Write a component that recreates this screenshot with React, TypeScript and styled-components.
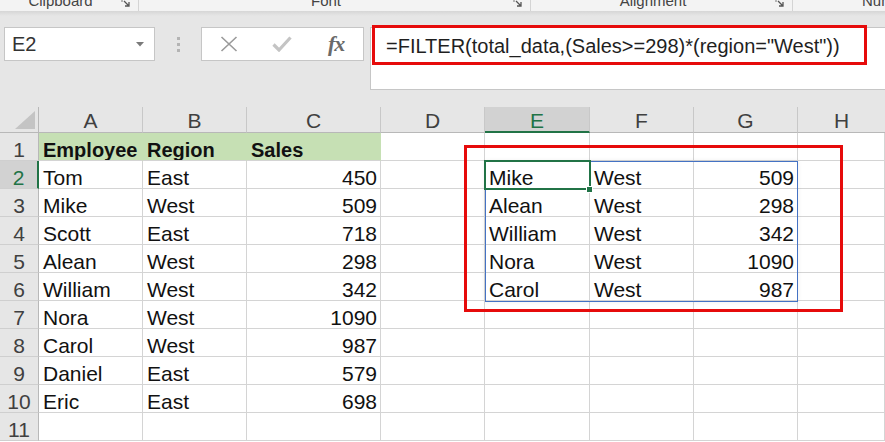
import React from 'react';
import styled, { createGlobalStyle, css } from 'styled-components';

const GlobalStyle = createGlobalStyle`
  html, body { margin: 0; padding: 0; background: #ffffff; }
  body { font-family: "Liberation Sans", Arial, sans-serif; overflow: hidden; }
`;

const GREEN = '#217346';
const GRID = '#d4d4d4';
const HEAD_BG = '#e6e6e6';

const Page = styled.div`
  width: 885px;
  height: 442px;
  overflow: hidden;
  background: #ffffff;
`;

/* ribbon group captions, cut at the top of the shot */
const Ribbon = styled.div`
  display: grid;
  grid-template-columns: 139px 392px 262px 1fr;
  height: 11px;
  overflow: hidden;
  background: #f3f3f3;
`;

const Group = styled.div<{ $last?: boolean }>`
  display: flex;
  align-items: flex-start;
  border-right: ${p => (p.$last ? 'none' : '1px solid #d4d4d4')};
`;

const GroupLabel = styled.div<{ $left?: number }>`
  flex: 1;
  margin-top: -8px;
  padding-left: ${p => (p.$left ? `${p.$left}px` : '0')};
  text-align: ${p => (p.$left ? 'left' : 'center')};
  font-size: 15px;
  line-height: 17px;
  color: #444444;
  white-space: nowrap;
`;

const Launcher = styled.svg`
  margin: -2px 6px 0 0;
  flex: none;
`;

const Toolbar = styled.div`
  display: flex;
  align-items: flex-start;
  padding: 16px 0 17px 4px;
  background: linear-gradient(#d6d6d6, ${HEAD_BG} 5px);
`;

const NameBox = styled.div`
  width: 151px;
  height: 34px;
  box-sizing: border-box;
  display: flex;
  align-items: center;
  justify-content: space-between;
  padding: 0 10px 0 7px;
  background: #ffffff;
  border: 1px solid #c6c6c6;
  font-size: 20px;
  color: #333333;
`;

const Grip = styled.div`
  width: 46px;
  height: 34px;
  display: flex;
  flex-direction: column;
  align-items: center;
  justify-content: center;
  gap: 3px;
`;

const GripDot = styled.span`
  width: 3px;
  height: 3px;
  background: #b4b4b4;
`;

const ButtonBox = styled.div`
  width: 163px;
  height: 34px;
  box-sizing: border-box;
  display: grid;
  grid-template-columns: repeat(3, 1fr);
  align-items: center;
  justify-items: center;
  background: #ffffff;
  border: 1px solid #c6c6c6;
`;

const Fx = styled.span`
  font-family: "Liberation Serif", "Times New Roman", serif;
  font-style: italic;
  font-weight: 700;
  font-size: 22px;
  color: #6a6a6a;
  letter-spacing: -1px;
`;

const FormulaBox = styled.div`
  position: relative;
  flex: 1;
  height: 63px;
  box-sizing: border-box;
  margin-left: 6px;
  padding: 2px 0 0 15px;
  background: #ffffff;
  border: 1px solid #c6c6c6;
  border-right: none;
  font-size: 20px;
  line-height: 32px;
  color: #1f1f1f;
  white-space: nowrap;
`;

const Annotation = styled.div<{ $x: number; $y: number; $w: number; $h: number }>`
  position: absolute;
  left: ${p => p.$x}px;
  top: ${p => p.$y}px;
  width: ${p => p.$w}px;
  height: ${p => p.$h}px;
  box-sizing: border-box;
  border: 3px solid #e60b0b;
  pointer-events: none;
`;

const Sheet = styled.div`
  position: relative;
`;

const Grid = styled.div`
  display: grid;
  grid-template-columns: 39px 104px 104px 134px 104px 105px 104px 104px 1fr;
  grid-template-rows: 26px;
  grid-auto-rows: 28px;
`;

const cellBase = css`
  box-sizing: border-box;
  overflow: hidden;
  white-space: nowrap;
`;

const Corner = styled.div`
  ${cellBase};
  display: flex;
  align-items: flex-end;
  justify-content: flex-end;
  padding: 0 3px 3px 0;
  background: ${HEAD_BG};
  border-right: 1px solid #b8b8b8;
  border-bottom: 1px solid #b8b8b8;
`;

const ColHead = styled.div<{ $active?: boolean; $last?: boolean }>`
  ${cellBase};
  padding-top: 2px;
  text-align: center;
  font-size: 21px;
  line-height: 24px;
  background: ${p => (p.$active ? '#d2d2d2' : HEAD_BG)};
  color: ${p => (p.$active ? GREEN : '#404040')};
  border-right: ${p => (p.$last ? 'none' : '1px solid #c8c8c8')};
  border-bottom: ${p => (p.$active ? `2px solid ${GREEN}` : '1px solid #b8b8b8')};
`;

const RowHead = styled.div<{ $active?: boolean }>`
  ${cellBase};
  padding-top: 6px;
  text-align: center;
  font-size: 21px;
  line-height: 22px;
  background: ${p => (p.$active ? '#d2d2d2' : HEAD_BG)};
  color: ${p => (p.$active ? GREEN : '#404040')};
  border-right: ${p => (p.$active ? `2px solid ${GREEN}` : '1px solid #b8b8b8')};
  border-bottom: 1px solid #cfcfcf;
`;

const Cell = styled.div<{ $num?: boolean; $head?: boolean }>`
  ${cellBase};
  padding: 6px ${p => (p.$num ? '3px' : '4px')} 0 4px;
  text-align: ${p => (p.$num ? 'right' : 'left')};
  font-size: ${p => (p.$head ? '20px' : '21px')};
  font-weight: ${p => (p.$head ? 700 : 400)};
  line-height: 22px;
  color: #111111;
  background: ${p => (p.$head ? '#c6e0b4' : '#ffffff')};
  border-right: 1px solid ${p => (p.$head ? '#c6e0b4' : GRID)};
  border-bottom: 1px solid ${GRID};
`;

const SpillFrame = styled.div`
  position: absolute;
  left: 485px;
  top: 54px;
  width: 313px;
  height: 141px;
  box-sizing: border-box;
  border: 1px solid #4472c4;
  box-shadow: 0 0 5px rgba(0, 0, 0, 0.07);
  pointer-events: none;
`;

const Selection = styled.div`
  position: absolute;
  left: 484px;
  top: 53px;
  width: 107px;
  height: 30px;
  box-sizing: border-box;
  border: 2px solid ${GREEN};
  pointer-events: none;
`;

const FillHandle = styled.div`
  position: absolute;
  left: 586px;
  top: 79px;
  width: 7px;
  height: 7px;
  box-sizing: border-box;
  background: ${GREEN};
  border: 1px solid #ffffff;
`;

type Row = [string, string, number | null];

const source: Row[] = [
  ['Tom', 'East', 450],
  ['Mike', 'West', 509],
  ['Scott', 'East', 718],
  ['Alean', 'West', 298],
  ['William', 'West', 342],
  ['Nora', 'West', 1090],
  ['Carol', 'West', 987],
  ['Daniel', 'East', 579],
  ['Eric', 'East', 698],
];

const result = source.filter(r => (r[2] ?? 0) >= 298 && r[1] === 'West');

const columns = ['A', 'B', 'C', 'D', 'E', 'F', 'G', 'H'];

const LauncherIcon = () => (
  <Launcher width="11" height="10" viewBox="0 0 11 10">
    <path d="M1 1 H4 M1 1 V4" stroke="#777" strokeWidth="1" fill="none" />
    <path d="M3 3 L8 8 M8 4 V8 H4" stroke="#555" strokeWidth="1.3" fill="none" />
  </Launcher>
);

const App: React.FC = () => {
  const bodyRows = Array.from({ length: 11 }, (_, i) => i + 1);

  const renderRow = (n: number) => {
    const cells: React.ReactNode[] = [];
    const src = n >= 2 ? source[n - 2] : undefined;
    const out = n >= 2 ? result[n - 2] : undefined;

    cells.push(
      <RowHead key={`h${n}`} $active={n === 2}>
        {n}
      </RowHead>,
    );

    if (n === 1) {
      cells.push(<Cell key="a" $head>Employee</Cell>);
      cells.push(<Cell key="b" $head>Region</Cell>);
      cells.push(<Cell key="c" $head>Sales</Cell>);
    } else {
      cells.push(<Cell key="a">{src?.[0]}</Cell>);
      cells.push(<Cell key="b">{src?.[1]}</Cell>);
      cells.push(<Cell key="c" $num>{src?.[2]}</Cell>);
    }
    cells.push(<Cell key="d" />);
    cells.push(<Cell key="e">{out?.[0]}</Cell>);
    cells.push(<Cell key="f">{out?.[1]}</Cell>);
    cells.push(<Cell key="g" $num>{out?.[2]}</Cell>);
    cells.push(<Cell key="h" />);
    return cells;
  };

  return (
    <Page>
      <GlobalStyle />
      <Ribbon>
        <Group>
          <GroupLabel>Clipboard</GroupLabel>
          <LauncherIcon />
        </Group>
        <Group>
          <GroupLabel>Font</GroupLabel>
          <LauncherIcon />
        </Group>
        <Group>
          <GroupLabel>Alignment</GroupLabel>
          <LauncherIcon />
        </Group>
        <Group $last>
          <GroupLabel $left={69}>Number</GroupLabel>
        </Group>
      </Ribbon>

      <Toolbar>
        <NameBox>
          <span>E2</span>
          <svg width="8" height="5" viewBox="0 0 8 5">
            <path d="M0 0 H8 L4 4.5 Z" fill="#7a7a7a" />
          </svg>
        </NameBox>
        <Grip>
          <GripDot />
          <GripDot />
          <GripDot />
        </Grip>
        <ButtonBox>
          <svg width="18" height="16" viewBox="0 0 18 16">
            <path d="M1.5 1 L16.5 15 M16.5 1 L1.5 15" stroke="#9a9a9a" strokeWidth="1.6" />
          </svg>
          <svg width="20" height="16" viewBox="0 0 20 16">
            <path d="M1.5 8.5 L7 14 L18.5 1.5" stroke="#c4c4c4" strokeWidth="3.2" fill="none" />
          </svg>
          <Fx>fx</Fx>
        </ButtonBox>
        <FormulaBox>
          =FILTER(total_data,(Sales&gt;=298)*(region="West"))
          <Annotation $x={1} $y={-3} $w={495} $h={40} />
        </FormulaBox>
      </Toolbar>

      <Sheet>
        <Grid>
          <Corner>
            <svg width="20" height="18" viewBox="0 0 20 18">
              <path d="M20 0 V18 H0 Z" fill="#c4c4c4" />
            </svg>
          </Corner>
          {columns.map((c, i) => (
            <ColHead key={c} $active={c === 'E'} $last={i === columns.length - 1}>
              {c}
            </ColHead>
          ))}
          {bodyRows.map(renderRow)}
        </Grid>
        <SpillFrame />
        <Selection />
        <FillHandle />
        <Annotation $x={464} $y={38} $w={379} $h={167} />
      </Sheet>
    </Page>
  );
};

export default App;
